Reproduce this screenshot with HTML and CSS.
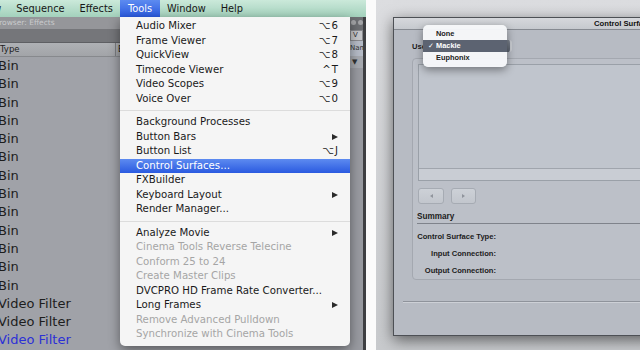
FILE: index.html
```html
<!doctype html>
<html>
	<head>
		<meta charset="utf-8" />
		<title>Control Surfaces</title>
		<link rel="stylesheet" href="styles.css">
	</head>
	<body>
		<div id="page">
			<div class="shot-fcp">
				<ul class="menubar">
					<li class="cut">View</li>
					<li>Sequence</li>
					<li>Effects</li>
					<li class="on">Tools</li>
					<li>Window</li>
					<li>Help</li>
				</ul>
				<div class="desk">
					<div class="browser">
						<div class="browser-title">Browser: Effects</div>
						<div class="browser-tabs"></div>
						<div class="browser-head">
							<span class="col-type">Type</span>
							<span class="col-next">Effect Class</span>
						</div>
						<ul class="browser-rows">
							<li>Bin</li>
							<li>Bin</li>
							<li>Bin</li>
							<li>Bin</li>
							<li>Bin</li>
							<li>Bin</li>
							<li>Bin</li>
							<li>Bin</li>
							<li>Bin</li>
							<li>Bin</li>
							<li>Bin</li>
							<li>Bin</li>
							<li>Bin</li>
							<li>Video Filter</li>
							<li>Video Filter</li>
							<li class="sel">Video Filter</li>
						</ul>
					</div>
					<div class="viewer">
						<div class="viewer-title"><i></i><i></i></div>
						<div class="viewer-tab">V</div>
						<div class="viewer-head">Name</div>
						<div class="viewer-sort">&#9660;</div>
					</div>
				</div>
				<ul class="menu">
					<li>Audio Mixer<span class="key">&#8997;6</span></li>
					<li>Frame Viewer<span class="key">&#8997;7</span></li>
					<li>QuickView<span class="key">&#8997;8</span></li>
					<li>Timecode Viewer<span class="key">^T</span></li>
					<li>Video Scopes<span class="key">&#8997;9</span></li>
					<li>Voice Over<span class="key">&#8997;0</span></li>
					<li class="sep"></li>
					<li>Background Processes</li>
					<li>Button Bars<span class="sub"></span></li>
					<li>Button List<span class="key">&#8997;J</span></li>
					<li class="hot">Control Surfaces...</li>
					<li>FXBuilder</li>
					<li>Keyboard Layout<span class="sub"></span></li>
					<li>Render Manager...</li>
					<li class="sep"></li>
					<li>Analyze Movie<span class="sub"></span></li>
					<li class="off">Cinema Tools Reverse Telecine</li>
					<li class="off">Conform 25 to 24</li>
					<li class="off">Create Master Clips</li>
					<li>DVCPRO HD Frame Rate Converter...</li>
					<li>Long Frames<span class="sub"></span></li>
					<li class="off">Remove Advanced Pulldown</li>
					<li class="off">Synchronize with Cinema Tools</li>
				</ul>
			</div>
			<div class="gap"></div>
			<div class="shot-dialog">
				<div class="dialog">
					<div class="dialog-title">Control Surfaces</div>
					<div class="dialog-body">
						<div class="use-row">
							<label>Use:</label>
							<span class="popup-btn"></span>
						</div>
						<div class="group">
							<div class="listbox"><div class="listbox-foot"></div></div>
							<div class="nav">
								<button class="prev"><span></span></button>
								<button class="next"><span></span></button>
							</div>
							<div class="summary">Summary</div>
							<dl class="facts">
								<div><dt>Control Surface Type:</dt><dd></dd></div>
								<div><dt>Input Connection:</dt><dd></dd></div>
								<div><dt>Output Connection:</dt><dd></dd></div>
							</dl>
						</div>
						<div class="rule"></div>
					</div>
					<ul class="popup">
						<li>None</li>
						<li class="hot"><span class="check">&#10003;</span>Mackie</li>
						<li>Euphonix</li>
					</ul>
				</div>
			</div>
		</div>
	</body>
</html>
```

FILE: styles.css
```css
*{
	margin:0;
	padding:0;
	box-sizing:border-box;
}
html,body{
	width:640px;
	height:350px;
	overflow:hidden;
	background:#fff;
}
body{
	font-family:"DejaVu Sans",sans-serif;
}
ul{
	list-style:none;
}
#page{
	display:flex;
	width:640px;
	height:350px;
}

/* left shot: final cut tools menu */
.shot-fcp{
	position:relative;
	width:366px;
	height:350px;
	overflow:hidden;
	display:flex;
	flex-direction:column;
	background:#a0a2a8;
}
.menubar{
	display:flex;
	height:17px;
	background:linear-gradient(#cbe9da,#a3d1bc);
	font-size:9.8px;
	line-height:17px;
	color:#151515;
}
.menubar li{
	padding:0 7.5px;
	white-space:nowrap;
}
.menubar li.cut{
	margin-left:-29.5px;
}
.menubar li.on{
	background:linear-gradient(#5d8bf0,#2b5be0);
	color:#fff;
}
.desk{
	display:flex;
	flex:1;
	min-height:0;
}
.browser{
	width:350px;
	display:flex;
	flex-direction:column;
}
.browser-title{
	height:12px;
	background:#95969a;
	color:#c9cacc;
	font-size:7.5px;
	line-height:12px;
	text-indent:-6px;
	white-space:nowrap;
	overflow:hidden;
}
.browser-tabs{
	height:14px;
	background:#75767a;
	border-bottom:1px solid #5e5f63;
}
.browser-head{
	height:14px;
	display:flex;
	background:linear-gradient(#afb1b5,#a2a4a8);
	border-bottom:1px solid #87898d;
	font-size:8.5px;
	line-height:13px;
	color:#222;
}
.col-type{
	width:116px;
	border-right:1px solid #7c7e82;
}
.col-next{
	width:6px;
	padding-left:2px;
	white-space:nowrap;
	overflow:hidden;
}
.browser-rows li{
	height:18.3px;
	line-height:18.3px;
	font-size:13px;
	color:#1d1d1d;
	text-indent:-2px;
	white-space:nowrap;
}
.browser-rows li.sel{
	color:#2c30d6;
}
.viewer{
	width:16px;
	display:flex;
	flex-direction:column;
	background:#999ba1;
	border-right:3px solid #3e3f42;
	font-size:7px;
	color:#333;
	overflow:hidden;
}
.viewer-title{
	height:13px;
	background:#6d6f73;
	display:flex;
	gap:2px;
	padding:3px 0 0 1px;
}
.viewer-title i{
	width:5px;
	height:5px;
	border-radius:50%;
	background:#a4a5a8;
}
.viewer-tab{
	height:11px;
	background:#c7c8cb;
	border:1px solid #8a8b8f;
	padding-left:2px;
	line-height:9px;
}
.viewer-head{
	height:15px;
	background:#b6bcc7;
	line-height:15px;
	white-space:nowrap;
}
.viewer-sort{
	height:12px;
	background:#a7aab0;
	line-height:12px;
	padding-left:2px;
}

.menu{
	position:absolute;
	left:120px;
	top:17px;
	width:230px;
	padding:2px 0 4px;
	background:#f5f5f5;
	border-radius:0 0 5px 5px;
	box-shadow:0 4px 12px rgba(0,0,0,.45);
	font-size:10.2px;
	color:#1a1a1a;
}
.menu li{
	height:14.5px;
	line-height:14.5px;
	padding:0 11px 0 16px;
	display:flex;
	justify-content:space-between;
	align-items:center;
	white-space:nowrap;
}
.menu li.off{
	color:#a5a5a5;
}
.menu li.hot{
	background:linear-gradient(#5d8bf0,#2a5ae0);
	color:#fff;
}
.menu li.sep{
	height:9px;
	padding:0;
}
.menu li.sep::after{
	content:"";
	flex:1;
	border-top:1px solid #dcdcdc;
}
.key{
	letter-spacing:1px;
}
.sub{
	width:0;
	height:0;
	border-left:6px solid #2a2a2a;
	border-top:3.5px solid transparent;
	border-bottom:3.5px solid transparent;
	margin-right:1px;
}

.gap{
	width:10px;
	background:#fbfbfb;
}

/* right shot: control surfaces dialog */
.shot-dialog{
	flex:1;
	overflow:hidden;
	background:linear-gradient(#dcdde0,#c8cacd);
	padding:17px 0 0 17px;
}
.dialog{
	position:relative;
	width:478px;
	height:319px;
	background:#b7bbc3;
	border:1px solid #4d5055;
	box-shadow:0 4px 14px rgba(0,0,0,.55);
	font-family:"Liberation Sans",sans-serif;
	font-weight:bold;
	color:#1c1c1c;
}
.dialog-title{
	height:12px;
	padding-right:14px;
	background:linear-gradient(#d6d8dc,#c6c9ce);
	border-bottom:1px solid #868a91;
	text-align:center;
	font-size:7.7px;
	line-height:11px;
	color:#111;
}
.dialog-body{
	padding:10px 18px 0;
}
.use-row{
	display:flex;
	align-items:center;
	height:12px;
	font-size:7.6px;
}
.popup-btn{
	margin-left:4px;
	width:80px;
	height:12px;
	border-radius:3px;
	background:linear-gradient(#7d8490,#5a616d);
	border-right:2px solid #c9ccd2;
}
.group{
	margin-top:6px;
	padding:5px 5px 0;
	background:#bcc0c8;
	border:1px solid #a4a8b0;
	border-radius:4px;
}
.listbox{
	height:117px;
	display:flex;
	flex-direction:column;
	justify-content:flex-end;
	background:#c0c5cd;
	border:1px solid #9aa0a8;
}
.listbox-foot{
	height:12px;
	background:#c9cdd4;
	border-top:1px solid #a0a5ad;
}
.nav{
	display:flex;
	gap:7px;
	margin-top:7px;
}
.nav button{
	width:26px;
	height:16px;
	display:flex;
	align-items:center;
	justify-content:center;
	background:linear-gradient(#cdd1d7,#c2c6cd);
	border:1px solid #a6abb3;
	border-radius:3px;
}
.nav button.next{
	width:25px;
}
.nav button span{
	width:0;
	height:0;
	border-top:2.5px solid transparent;
	border-bottom:2.5px solid transparent;
}
.nav .prev span{
	border-right:3px solid #8f949c;
}
.nav .next span{
	border-left:3px solid #8f949c;
}
.summary{
	margin:7px 0 0 -1px;
	height:13px;
	border-bottom:1px solid #7f838b;
	font-size:8.2px;
	line-height:12px;
}
.facts{
	margin:4px 0 0 -1px;
	font-size:7.6px;
}
.facts div{
	display:flex;
	height:17px;
	line-height:17px;
}
.facts dt{
	width:79px;
	text-align:right;
	white-space:nowrap;
}
.rule{
	margin:21px -18px 0 -9px;
	border-top:1px solid #8f939b;
	border-bottom:1px solid #cdd0d6;
}
.popup{
	position:absolute;
	left:29px;
	top:7px;
	width:84px;
	padding:3px 0;
	background:rgba(246,247,249,.97);
	border-radius:5px;
	box-shadow:0 3px 8px rgba(0,0,0,.4);
	font-size:7.4px;
}
.popup li{
	height:12px;
	line-height:12px;
	padding-left:13px;
	color:#222;
}
.popup li.hot{
	background:#5c6371;
	color:#fff;
}
.check{
	display:inline-block;
	width:8px;
	margin-left:-8px;
	font-family:"DejaVu Sans",sans-serif;
	font-weight:normal;
	font-size:7px;
}
```
